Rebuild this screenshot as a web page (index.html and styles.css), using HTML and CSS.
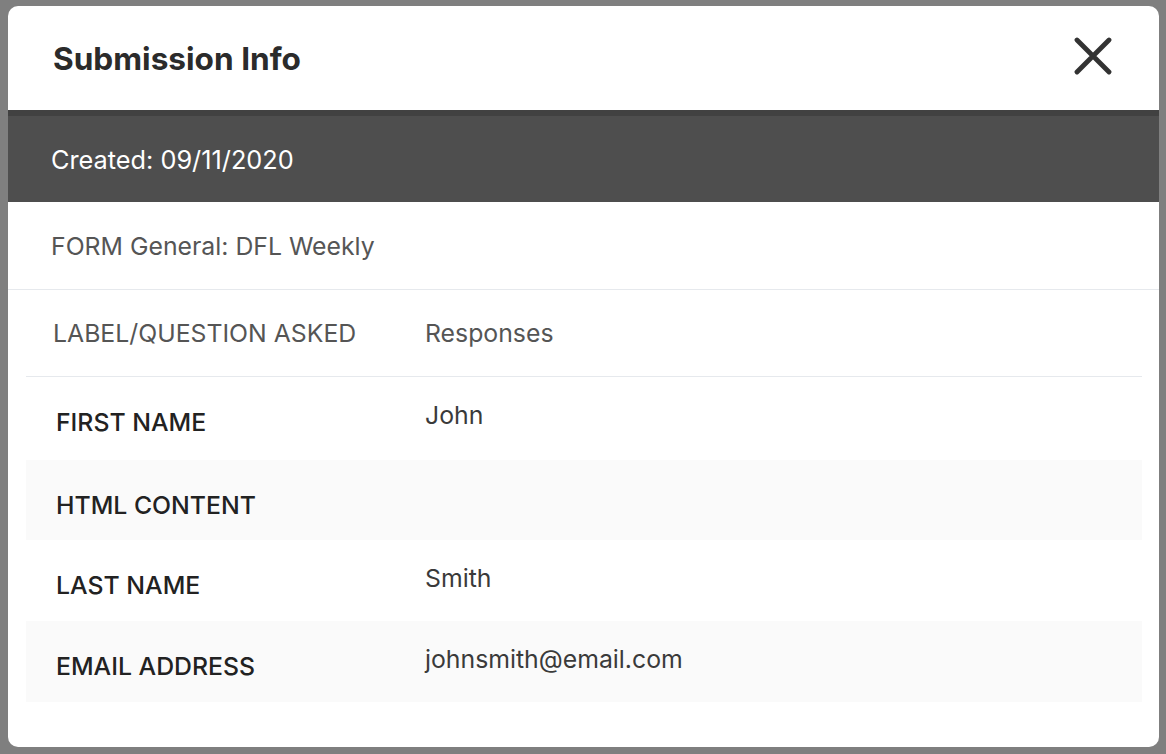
FILE: index.html
```html
<!DOCTYPE html>
<html lang="en">
<head>
    <meta charset="UTF-8">
    <meta name="viewport" content="width=device-width, initial-scale=1.0">
    <title>Submission Info</title>
    <link rel="stylesheet" href="styles.css">
</head>
<body>
    <div class="modal">
        <div class="modal-header">
            <h1>Submission Info</h1>
            <button class="close-btn" aria-label="Close">
                <svg width="38" height="38" viewBox="0 0 38 38">
                    <path d="M3 3 L35 35 M35 3 L3 35" stroke="#333" stroke-width="4.8" stroke-linecap="round" fill="none"/>
                </svg>
            </button>
        </div>

        <div class="created-bar">Created: 09/11/2020</div>

        <div class="form-name">FORM General: DFL Weekly</div>

        <div class="responses">
            <div class="row head">
                <div class="label">LABEL/QUESTION ASKED</div>
                <div class="value">Responses</div>
            </div>
            <div class="row first">
                <div class="label">FIRST NAME</div>
                <div class="value">John</div>
            </div>
            <div class="row alt short">
                <div class="label">HTML CONTENT</div>
                <div class="value"></div>
            </div>
            <div class="row">
                <div class="label">LAST NAME</div>
                <div class="value">Smith</div>
            </div>
            <div class="row alt">
                <div class="label">EMAIL ADDRESS</div>
                <div class="value">johnsmith@email.com</div>
            </div>
        </div>
    </div>
</body>
</html>
```

FILE: styles.css
```css
html, body {
    height: 100%;
}
body {
    margin: 0;
    padding: 6px 7px 7px 8px;
    box-sizing: border-box;
    background: #7f7f7f;
    font-family: Inter, "Open Sans", Arial, sans-serif;
}
.modal {
    background: #fff;
    border-radius: 10px;
    height: 741px;
    overflow: hidden;
}
.modal-header {
    height: 104px;
    display: flex;
    align-items: center;
    justify-content: space-between;
    padding: 0 47px 0 45px;
}
.modal-header h1 {
    margin: 0;
    font-size: 31.6px;
    font-weight: 700;
    color: #2b2b2b;
}
.close-btn {
    background: none;
    border: none;
    padding: 0;
    width: 38px;
    height: 38px;
    margin-top: -4px;
    cursor: pointer;
}
.created-bar {
    height: 86px;
    border-top: 6px solid #414141;
    background: #4e4e4e;
    color: #fff;
    font-size: 25.3px;
    display: flex;
    align-items: center;
    padding-left: 43px;
}
.form-name {
    height: 87px;
    border-bottom: 1px solid #e6e9ed;
    display: flex;
    align-items: center;
    padding-left: 43px;
    font-size: 24.8px;
    color: #555;
}
.responses {
    padding: 0 17px 0 18px;
}
.row {
    display: grid;
    grid-template-columns: 369px 1fr;
    height: 81px;
}
.row.first {
    height: 83px;
}
.row.short {
    height: 80px;
}
.row .label {
    padding: 30px 0 0 30px;
    font-size: 24.8px;
    font-weight: 500;
    color: #222;
}
.row .value {
    padding: 23px 0 0 30px;
    font-size: 24.8px;
    color: #3a3a3a;
}
.row.head {
    height: 86px;
    border-bottom: 1px solid #e6e9ed;
    align-items: center;
}
.row.head .label,
.row.head .value {
    padding-top: 0;
    font-weight: 400;
    color: #555;
}
.row.head .label {
    padding-left: 27px;
}
.row.alt {
    background: #fafafa;
}
```
